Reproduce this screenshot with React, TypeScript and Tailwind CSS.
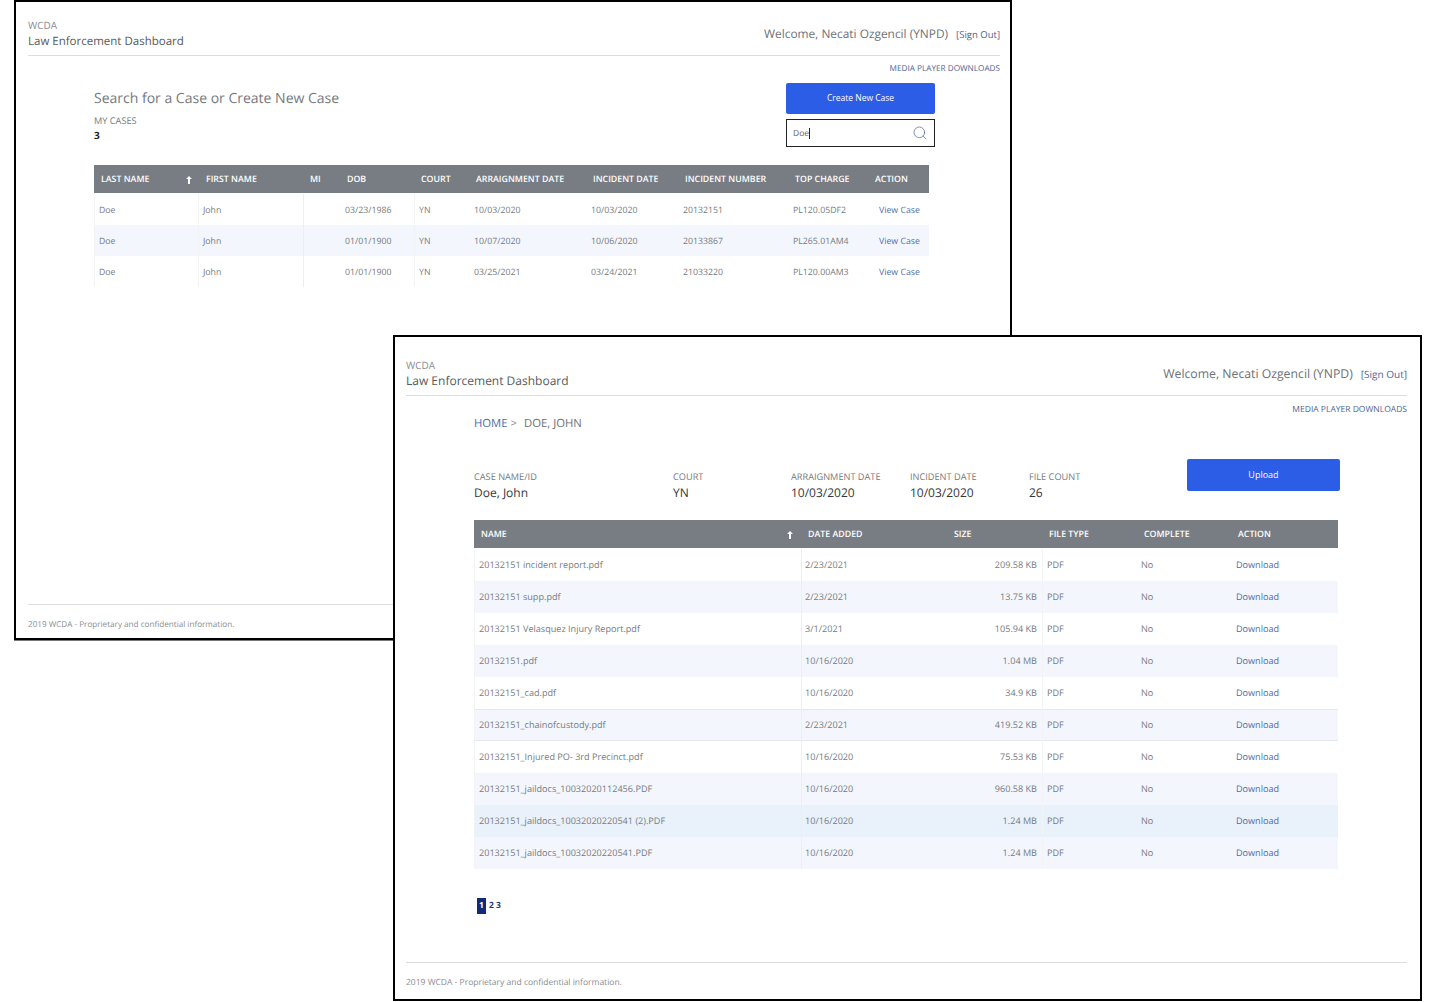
import { Search } from "lucide-react";

function Arrow() {
  return (
    <svg width="6" height="8" viewBox="0 0 6 8" className="block">
      <path d="M3 0 L6 3 H4 V8 H2 V3 H0 Z" fill="#ffffff" />
    </svg>
  );
}

function Header({ titleClass, barPad, welcomeSize, welcomeMb, signSize }: { titleClass: string; barPad: string; welcomeSize: string; welcomeMb: string; signSize: string }) {
  return (
    <div className={`${barPad} flex items-end justify-between border-b border-[#dcdde0]`}>
      <div>
        <div className="text-[10px] leading-[13px] text-[#8a8d91]">WCDA</div>
        <div className={`${titleClass} leading-[16px] text-[#55595e]`}>Law Enforcement Dashboard</div>
      </div>
      <div className={`${welcomeMb} flex items-baseline gap-[8px]`}>
        <span className={`${welcomeSize} leading-[17px] text-[#6d7177]`}>Welcome, Necati Ozgencil (YNPD)</span>
        <span className={`${signSize} text-[#4c6496]`}>[Sign Out]</span>
      </div>
    </div>
  );
}

const caseHeaders = ["LAST NAME", "FIRST NAME", "MI", "DOB", "COURT", "ARRAIGNMENT DATE", "INCIDENT DATE", "INCIDENT NUMBER", "TOP CHARGE", "ACTION"];
const caseRows = [
  ["Doe", "John", "", "03/23/1986", "YN", "10/03/2020", "10/03/2020", "20132151", "PL120.05DF2"],
  ["Doe", "John", "", "01/01/1900", "YN", "10/07/2020", "10/06/2020", "20133867", "PL265.01AM4"],
  ["Doe", "John", "", "01/01/1900", "YN", "03/25/2021", "03/24/2021", "21033220", "PL120.00AM3"],
];
const caseGrid = "grid grid-cols-[105px_105px_37px_74px_55px_117px_92px_110px_80px_60px]";

const files = [
  ["20132151 incident report.pdf", "2/23/2021", "209.58 KB"],
  ["20132151 supp.pdf", "2/23/2021", "13.75 KB"],
  ["20132151 Velasquez Injury Report.pdf", "3/1/2021", "105.94 KB"],
  ["20132151.pdf", "10/16/2020", "1.04 MB"],
  ["20132151_cad.pdf", "10/16/2020", "34.9 KB"],
  ["20132151_chainofcustody.pdf", "2/23/2021", "419.52 KB"],
  ["20132151_Injured PO- 3rd Precinct.pdf", "10/16/2020", "75.53 KB"],
  ["20132151_jaildocs_10032020112456.PDF", "10/16/2020", "960.58 KB"],
  ["20132151_jaildocs_10032020220541 (2).PDF", "10/16/2020", "1.24 MB"],
  ["20132151_jaildocs_10032020220541.PDF", "10/16/2020", "1.24 MB"],
];
const fileGrid = "grid grid-cols-[327px_146px_95px_95px_95px_106px]";

function rowBg(i: number) {
  if (i === 8) return "bg-[#e9f1fb]";
  return i % 2 === 1 ? "bg-[#f3f6fd]" : "bg-white";
}

function caseCellLine(j: number) {
  if (j === 0) return "border-l border-r border-[#f2f3f5]";
  if (j === 1) return "border-r border-[#eceef1]";
  if (j === 3) return "border-r border-[#f2f3f5]";
  return "";
}

function CaseWindow() {
  return (
    <section className="absolute left-[14px] top-0 flex h-[640px] w-[998px] flex-col border-2 border-black bg-white pl-[12px] pr-[10px] pt-[17px] shadow-[0_1px_0_#777]">
      <Header titleClass="mt-[2px] text-[11.5px]" barPad="pb-[5px]" welcomeSize="text-[11.9px]" welcomeMb="mb-[7px]" signSize="text-[9.5px]" />
      <div className="mt-[7px] text-right text-[8.2px] leading-[12px] text-[#4c6496]">MEDIA PLAYER DOWNLOADS</div>
      <div className="ml-[66px] mt-[2px] flex w-[841px] justify-between">
        <div>
          <h1 className="mt-[12px] text-[14px] font-normal leading-[20px] text-[#75797e]">Search for a Case or Create New Case</h1>
          <div className="mt-[6px] text-[9.2px] leading-[12px] text-[#75797e]">MY CASES</div>
          <div className="mt-[1px] text-[10px] font-bold leading-[14px] text-[#222]">3</div>
        </div>
        <div className="mt-[6px] flex w-[149px] flex-col gap-[5px]">
          <button className="h-[31px] rounded-[2px] bg-[#2b5de6] text-[8.5px] text-white">Create New Case</button>
          <div className="flex h-[28px] items-center justify-between border border-[#222] bg-white pl-[6px] pr-[6px]">
            <span className="border-r border-[#222] text-[8.5px] leading-[11px] text-[#666]">Doe</span>
            <Search size={16} strokeWidth={1} className="text-[#3f5f86]" />
          </div>
        </div>
      </div>
      <div className="ml-[66px] mt-[18px] w-[835px]">
        <div className={`${caseGrid} h-[28px] items-center bg-[#787d83] pt-[1px] text-[8.8px] font-semibold text-white`}>
          {caseHeaders.map((h, i) => (
            <div key={h} className={`flex items-center ${i < 2 ? "pl-[7px]" : "pl-[6px]"} ${i === 0 ? "justify-between pr-[7px]" : ""}`}>
              <span className="whitespace-nowrap">{h}</span>
              {i === 0 && <Arrow />}
            </div>
          ))}
        </div>
        <div className="mt-[1px]">
          {caseRows.map((r, i) => (
            <div key={i} className={`${caseGrid} h-[31px] items-stretch text-[8.75px] text-[#777b80] ${rowBg(i)}`}>
              {r.map((c, j) => (
                <div key={j} className={`flex items-center pl-[4px] pt-[2px] ${caseCellLine(j)}`}>{c}</div>
              ))}
              <div className="flex items-center pl-[10px] pt-[2px] text-[#4c6ea8]">View Case</div>
            </div>
          ))}
        </div>
      </div>
      <div className="mt-auto border-t border-[#dcdde0] pb-[7px] pt-[14px] text-[8.15px] leading-[12px] text-[#8a8d91]">2019 WCDA - Proprietary and confidential information.</div>
    </section>
  );
}

function Meta({ label, value, width }: { label: string; value: string; width: string }) {
  return (
    <div className={width}>
      <div className="text-[9.2px] leading-[12px] text-[#75797e]">{label}</div>
      <div className="mt-[1px] text-[12px] leading-[17px] text-[#33373b]">{value}</div>
    </div>
  );
}

function FileWindow() {
  return (
    <section className="absolute left-[393px] top-[335px] flex h-[666px] w-[1029px] flex-col border-2 border-black bg-white pl-[11px] pr-[13px] pt-[22px]">
      <Header titleClass="mt-[1px] text-[12px]" barPad="pb-[6px]" welcomeSize="text-[12.25px]" welcomeMb="mb-[7px]" signSize="text-[10px]" />
      <div className="mt-[8px] text-right text-[8.5px] leading-[12px] text-[#4c6496]">MEDIA PLAYER DOWNLOADS</div>
      <div className="ml-[68px] flex items-center text-[11.3px] leading-[16px]">
        <span className="text-[#4c6ea8]">HOME</span>
        <span className="ml-[3px] text-[#8a8d91]">&gt;</span>
        <span className="ml-[7px] text-[#6d7177]">DOE, JOHN</span>
      </div>
      <div className="ml-[68px] mt-[27px] flex w-[866px] items-start">
        <div className="mt-[12px] flex">
          <Meta label="CASE NAME/ID" value="Doe, John" width="w-[199px]" />
          <Meta label="COURT" value="YN" width="w-[118px]" />
          <Meta label="ARRAIGNMENT DATE" value="10/03/2020" width="w-[119px]" />
          <Meta label="INCIDENT DATE" value="10/03/2020" width="w-[119px]" />
          <Meta label="FILE COUNT" value="26" width="w-[158px]" />
        </div>
        <button className="h-[32px] w-[153px] rounded-[2px] bg-[#2b5de6] text-[9px] text-white">Upload</button>
      </div>
      <div className="ml-[68px] mt-[19px] w-[864px]">
        <div className={`${fileGrid} h-[28px] items-center bg-[#787d83] pt-[1px] text-[8.8px] font-semibold text-white`}>
          <div className="flex items-center justify-between pl-[7px] pr-[8px]"><span>NAME</span><Arrow /></div>
          <div className="pl-[7px]">DATE ADDED</div>
          <div className="pl-[7px]">SIZE</div>
          <div className="pl-[7px]">FILE TYPE</div>
          <div className="pl-[7px]">COMPLETE</div>
          <div className="pl-[6px]">ACTION</div>
        </div>
        <div className="mt-[1px]">
          {files.map((f, i) => (
            <div key={f[0]} className={`${fileGrid} h-[32px] items-stretch text-[9.1px] text-[#777b80] ${rowBg(i)} ${i === 5 ? "shadow-[inset_0_1px_0_#e4e8ee,inset_0_-1px_0_#e4e8ee]" : ""}`}>
              <div className="flex items-center border-l border-[#f2f3f5] pl-[4px]">{f[0]}</div>
              <div className="flex items-center border-l border-[#eceef1] pl-[3px]">{f[1]}</div>
              <div className="flex items-center justify-end pr-[5px]">{f[2]}</div>
              <div className="flex items-center border-l border-[#f2f3f5] pl-[4px]">PDF</div>
              <div className="flex items-center pl-[4px]">No</div>
              <div className="flex items-center pl-[4px] text-[#4c6ea8]">Download</div>
            </div>
          ))}
        </div>
      </div>
      <div className="ml-[71px] mt-[29px] flex items-center text-[8.5px] font-bold leading-[16px] text-[#1f3a7a]">
        <span className="flex h-[16px] w-[9px] items-center justify-center bg-[#12297a] text-white">1</span>
        <span className="ml-[3px]">2</span>
        <span className="ml-[2px]">3</span>
      </div>
      <div className="mt-auto border-t border-[#dcdde0] pb-[10px] pt-[14px] text-[8.5px] leading-[12px] text-[#8a8d91]">2019 WCDA - Proprietary and confidential information.</div>
    </section>
  );
}

export default function App() {
  return (
    <div className="relative h-[1002px] w-[1430px] overflow-hidden bg-white font-['Open_Sans','Liberation_Sans',sans-serif] opacity-[0.999] [text-rendering:geometricPrecision]">
      <CaseWindow />
      <FileWindow />
    </div>
  );
}
